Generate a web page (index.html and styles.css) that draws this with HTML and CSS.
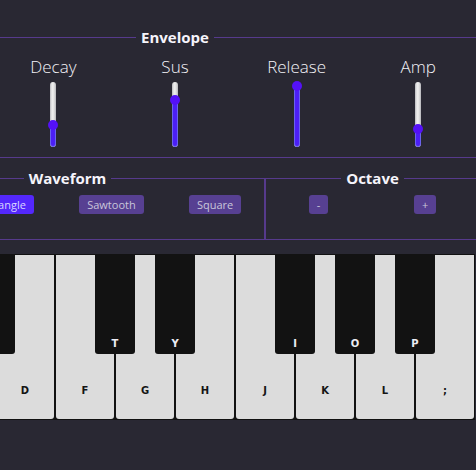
FILE: index.html
```html
<!DOCTYPE html>
<html lang="en">
<head>
<meta charset="utf-8">
<title>Synth</title>
<link rel="stylesheet" href="styles.css">
</head>
<body>
<div class="app">
  <fieldset class="group envelope">
    <legend class="group-title">Envelope</legend>
    <div class="sliders">
      <div class="control">
        <span class="control-label">Attack</span>
        <div class="slider"><div class="fill" style="height:30px"></div><div class="thumb" style="bottom:25px"></div></div>
      </div>
      <div class="control">
        <span class="control-label">Decay</span>
        <div class="slider"><div class="fill" style="height:22px"></div><div class="thumb" style="bottom:17px"></div></div>
      </div>
      <div class="control">
        <span class="control-label">Sus</span>
        <div class="slider"><div class="fill" style="height:47px"></div><div class="thumb" style="bottom:42px"></div></div>
      </div>
      <div class="control">
        <span class="control-label">Release</span>
        <div class="slider"><div class="fill" style="height:61px"></div><div class="thumb" style="bottom:56px"></div></div>
      </div>
      <div class="control">
        <span class="control-label">Amp</span>
        <div class="slider"><div class="fill" style="height:18px"></div><div class="thumb" style="bottom:13px"></div></div>
      </div>
    </div>
  </fieldset>

  <div class="row">
    <fieldset class="group waveform">
      <legend class="group-title">Waveform</legend>
      <div class="buttons">
        <button class="btn">Sine</button>
        <button class="btn active">Triangle</button>
        <button class="btn">Sawtooth</button>
        <button class="btn">Square</button>
      </div>
    </fieldset>
    <fieldset class="group octave">
      <legend class="group-title">Octave</legend>
      <div class="buttons">
        <button class="btn">-</button>
        <button class="btn">+</button>
      </div>
    </fieldset>
  </div>

  <div class="keyboard">
    <div class="white-key"><span>A</span></div>
    <div class="white-key"><span>S</span></div>
    <div class="white-key"><span>D</span></div>
    <div class="white-key"><span>F</span></div>
    <div class="white-key"><span>G</span></div>
    <div class="white-key"><span>H</span></div>
    <div class="white-key"><span>J</span></div>
    <div class="white-key"><span>K</span></div>
    <div class="white-key"><span>L</span></div>
    <div class="white-key"><span>;</span></div>
    <div class="black-key" style="left:40px"><span>W</span></div>
    <div class="black-key" style="left:100px"><span>E</span></div>
    <div class="black-key" style="left:220px"><span>T</span></div>
    <div class="black-key" style="left:280px"><span>Y</span></div>
    <div class="black-key" style="left:400px"><span>I</span></div>
    <div class="black-key" style="left:460px"><span>O</span></div>
    <div class="black-key" style="left:520px"><span>P</span></div>
  </div>
</div>
</body>
</html>
```

FILE: styles.css
```css
html, body {
  margin: 0;
  padding: 0;
  background: #292833;
  overflow: hidden;
}

body {
  font-family: "Open Sans", "Noto Sans", sans-serif;
  color: #e8e6f0;
}

.app {
  width: 610px;
  margin-left: -130px;
  padding-top: 27px;
}

.group {
  margin: 0;
  border: 1px solid #563a8c;
  padding: 0;
  min-width: 0;
}

.group-title {
  margin: 0 auto;
  padding: 0 5px;
  font-weight: 700;
  font-size: 15px;
  line-height: 20px;
  color: #f6f4fb;
}

.envelope {
  padding-bottom: 10px;
}

.sliders {
  display: flex;
  padding-top: 10px;
}

.control {
  flex: 1;
  display: flex;
  flex-direction: column;
  align-items: center;
}

.control-label {
  font-weight: 300;
  font-size: 17px;
  line-height: 20px;
  color: #f4f3f8;
}

.slider {
  position: relative;
  width: 6px;
  height: 65px;
  margin-top: 5px;
  border-radius: 3px;
  background: linear-gradient(to right, #b9b9bd, #efefef 35%, #e4e4e4 65%, #b5b5ba);
}

.fill {
  position: absolute;
  left: 0;
  bottom: 0;
  width: 6px;
  box-sizing: border-box;
  border: 1px solid #6a62ee;
  border-radius: 3px;
  background: #4c1ff6;
}

.thumb {
  position: absolute;
  left: -2px;
  width: 10px;
  height: 10px;
  border-radius: 50%;
  background: #5411f7;
}

.row {
  display: flex;
  margin-top: 10px;
}

.waveform {
  flex: 0 0 395px;
  box-sizing: border-box;
}

.octave {
  flex: 1;
}

.buttons {
  display: flex;
  justify-content: space-around;
  align-items: flex-start;
  padding-top: 7px;
  padding-bottom: 25px;
}

.btn {
  font-family: "Open Sans", "Noto Sans", sans-serif;
  font-size: 11px;
  line-height: 13px;
  padding: 3px 8px;
  border: none;
  border-radius: 3px;
  background: #574092;
  color: #c9c6da;
}

.btn.active {
  background: #5428fc;
  color: #d9d5ff;
}

.keyboard {
  position: relative;
  display: flex;
  width: 600px;
  margin: 14px auto 0;
  padding: 1px 0;
  background: #111111;
}

.white-key {
  width: 58px;
  height: 164px;
  margin: 0 1px;
  box-sizing: border-box;
  padding-bottom: 22px;
  border-radius: 0 0 3px 3px;
  background: #dcdcdc;
  display: flex;
  align-items: flex-end;
  justify-content: center;
  font-family: "DejaVu Sans", sans-serif;
  font-weight: 700;
  font-size: 10px;
  line-height: 12px;
  color: #141414;
}

.black-key {
  position: absolute;
  top: 0;
  width: 40px;
  height: 100px;
  box-sizing: border-box;
  padding-bottom: 4px;
  border-radius: 0 0 3px 3px;
  background: #121212;
  display: flex;
  align-items: flex-end;
  justify-content: center;
  font-family: "DejaVu Sans", sans-serif;
  font-weight: 700;
  font-size: 10px;
  line-height: 12px;
  color: #ececf4;
}
```
